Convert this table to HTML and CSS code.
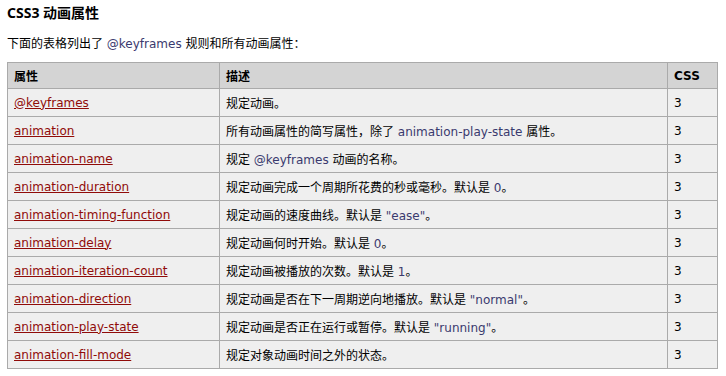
FILE: index.html
```html
<!DOCTYPE html>
<html lang="zh-CN">
<head>
<meta charset="utf-8">
<title>CSS3 动画属性</title>
<link rel="stylesheet" href="styles.css">
</head>
<body>
<div class="page">
  <h2 class="title">CSS3 动画属性</h2>
  <p class="intro">下面的表格列出了 <code>@keyframes</code> 规则和所有动画属性：</p>
  <table class="ref">
    <colgroup>
      <col class="c1"><col class="c2"><col class="c3">
    </colgroup>
    <thead>
      <tr><th>属性</th><th>描述</th><th>CSS</th></tr>
    </thead>
    <tbody>
      <tr><td><a href="#">@keyframes</a></td><td>规定动画。</td><td>3</td></tr>
      <tr><td><a href="#">animation</a></td><td>所有动画属性的简写属性，除了 <code>animation-play-state</code> 属性。</td><td>3</td></tr>
      <tr><td><a href="#">animation-name</a></td><td>规定 <code>@keyframes</code> 动画的名称。</td><td>3</td></tr>
      <tr><td><a href="#">animation-duration</a></td><td>规定动画完成一个周期所花费的秒或毫秒。默认是 <code>0</code>。</td><td>3</td></tr>
      <tr><td><a href="#">animation-timing-function</a></td><td>规定动画的速度曲线。默认是 <code>"ease"</code>。</td><td>3</td></tr>
      <tr><td><a href="#">animation-delay</a></td><td>规定动画何时开始。默认是 <code>0</code>。</td><td>3</td></tr>
      <tr><td><a href="#">animation-iteration-count</a></td><td>规定动画被播放的次数。默认是 <code>1</code>。</td><td>3</td></tr>
      <tr><td><a href="#">animation-direction</a></td><td>规定动画是否在下一周期逆向地播放。默认是 <code>"normal"</code>。</td><td>3</td></tr>
      <tr><td><a href="#">animation-play-state</a></td><td>规定动画是否正在运行或暂停。默认是 <code>"running"</code>。</td><td>3</td></tr>
      <tr><td><a href="#">animation-fill-mode</a></td><td>规定对象动画时间之外的状态。</td><td>3</td></tr>
    </tbody>
  </table>
</div>
</body>
</html>
```

FILE: styles.css
```css
html, body {
  margin: 0;
  padding: 0;
  background: #fff;
}

body {
  font-family: "DejaVu Sans", Verdana, "Noto Sans CJK SC", sans-serif;
  font-size: 12px;
  color: #000;
}

.page {
  padding: 4px 7px 0 7px;
}

.title {
  margin: 0;
  font-family: "Noto Sans", "Noto Sans CJK SC", sans-serif;
  font-size: 14px;
  font-weight: bold;
  line-height: 18px;
  height: 18px;
}

.intro {
  margin: 14px 0 0 0;
  line-height: 16px;
  height: 16px;
}

code {
  font-family: "DejaVu Sans", Verdana, sans-serif;
  font-size: 12px;
  color: #3a3a6e;
}

.ref {
  margin-top: 10px;
  border-collapse: collapse;
  width: 710px;
  table-layout: fixed;
  border: 1px solid #aaa;
}

.c1 { width: 212px; }
.c2 { width: 448px; }
.c3 { width: 50px; }

.ref th,
.ref td {
  border: 1px solid #aaa;
  padding: 0 6px;
  text-align: left;
  vertical-align: middle;
  white-space: nowrap;
}

.ref th {
  background: #d4d4d4;
  font-weight: bold;
  height: 25px;
}

.ref td {
  background: #efefef;
  height: 27px;
}

.ref a {
  color: #900b09;
  text-decoration: underline;
}
```
